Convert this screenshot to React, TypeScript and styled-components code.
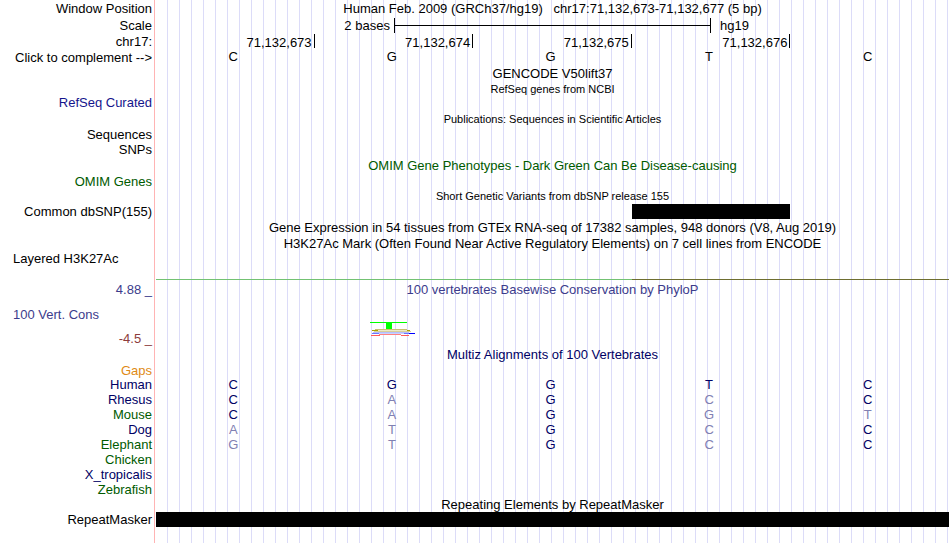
import React from "react";
import styled, { createGlobalStyle } from "styled-components";

const GlobalStyle = createGlobalStyle`
  *, *::before, *::after { box-sizing: border-box; }
  body {
    margin: 0;
    background: #fff;
    color: #000;
    font-family: "Liberation Sans", Arial, Helvetica, sans-serif;
    font-size: 13px;
    line-height: 15px;
  }
`;

const LABEL_WIDTH = 154;

const Browser = styled.main`
  display: flex;
  flex-direction: column;
  min-height: 100vh;
  margin-right: 1px;
  background:
    linear-gradient(#ffb4b4, #ffb4b4) ${LABEL_WIDTH}px 0 / 1px 100% no-repeat,
    repeating-linear-gradient(to right, transparent 0 11px, #dcdcf8 11px 12px) ${LABEL_WIDTH + 2}px 0 no-repeat;
`;

const Row = styled.div<{ $h: number }>`
  display: grid;
  grid-template-columns: ${LABEL_WIDTH}px minmax(0, 1fr);
  column-gap: 2px;
  align-items: center;
  height: ${(p) => p.$h}px;
`;

const Label = styled.span<{ $color?: string; $left?: boolean; $align?: "start" | "end" }>`
  padding: 0 2px 0 13px;
  color: ${(p) => p.$color ?? "#000"};
  text-align: ${(p) => (p.$left ? "left" : "right")};
  align-self: ${(p) => p.$align ?? "center"};
  white-space: nowrap;
`;

const ComplementButton = styled.button`
  padding: 0 2px 0 0;
  border: 0;
  background: none;
  color: inherit;
  font: inherit;
  text-align: right;
  white-space: nowrap;
  cursor: pointer;
`;

const Title = styled.h2<{ $color?: string; $small?: boolean }>`
  grid-column: 2;
  margin: 0;
  padding-top: ${(p) => (p.$small ? 1 : 0)}px;
  color: ${(p) => p.$color ?? "#000"};
  font-size: ${(p) => (p.$small ? 11 : 13)}px;
  font-weight: 400;
  text-align: center;
  white-space: pre;
`;

const Scale = styled.div`
  display: grid;
  grid-template-columns: 3fr 4fr 3fr;
  align-items: center;
`;

const ScaleText = styled.span<{ $left?: boolean }>`
  padding: ${(p) => (p.$left ? "0 4px 0 0" : "0 0 0 9px")};
  text-align: ${(p) => (p.$left ? "right" : "left")};
`;

const ScaleBar = styled.div`
  display: flex;
  align-items: center;
  height: 15px;
  border: solid #000;
  border-width: 0 1px;
  &::before {
    content: "";
    flex: 1;
    height: 1px;
    background: #000;
  }
`;

const Columns = styled.div`
  grid-column: 2;
  align-self: start;
  display: grid;
  grid-template-columns: repeat(5, minmax(0, 1fr));
`;

const Tick = styled.span`
  height: 14px;
  padding-right: 2px;
  border-right: 1px solid #000;
  line-height: 17px;
  text-align: right;
`;

const Base = styled.span<{ $color?: string }>`
  padding-right: 4px;
  color: ${(p) => p.$color ?? "#000"};
  text-align: center;
`;

const Variant = styled.div`
  grid-column: 4;
  height: 15px;
  background: #000;
`;

const Repeat = styled.div`
  height: 15px;
  background: #000;
`;

const Signal = styled.div`
  grid-column: 2;
  height: 1px;
  background: linear-gradient(to right, #73c273 60%, #6e6e30 60%);
`;

const LogoCell = styled.div`
  grid-column: 2;
  display: flex;
  justify-content: center;
`;

const NAVY = "#000064";
const GREEN = "#005a00";
const SLATE = "#3c3c8c";
const FADED = "#8080b2";

function ConservationLogo() {
  return (
    <svg width="48" height="16" viewBox="0 0 48 16" aria-hidden="true">
      <path d="M0 .5h37" stroke="#00ff00" />
      <path d="M16 1h6v6h-6z" fill="#00ff00" />
      <path d="M5 7.5h32" stroke="#c9c070" />
      <path d="M7 8.5h30" stroke="#eee9c8" />
      <path d="M2 8.5h6M37 8.5h3" stroke="#a9a000" />
      <path d="M4 9.5h37" stroke="#d6cf9a" />
      <path d="M3 10.5h36" stroke="#b4beff" />
      <path d="M2 11.5h38" stroke="#c8d2ff" />
      <path d="M2 11.5h7M34 11.5h5" stroke="#6a76ff" />
      <path d="M39 11.5h6" stroke="#0000ff" />
      <path d="M9 12.5h22" stroke="#ff8080" />
      <path d="M1 13.5h9M31 13.5h8" stroke="#ff5a5a" />
    </svg>
  );
}

const positions = ["71,132,673", "71,132,674", "71,132,675", "71,132,676"];
const reference = "CGGTC";

/* Lower-case letters differ from the human base and are drawn faded. */
const species = [
  { name: "Human", color: NAVY, bases: "CGGTC" },
  { name: "Rhesus", color: NAVY, bases: "CaGcC" },
  { name: "Mouse", color: GREEN, bases: "CaGgt" },
  { name: "Dog", color: NAVY, bases: "atGcC" },
  { name: "Elephant", color: GREEN, bases: "gtGcC" },
  { name: "Chicken", color: GREEN, bases: "" },
  { name: "X_tropicalis", color: NAVY, bases: "" },
  { name: "Zebrafish", color: GREEN, bases: "" },
];

export default function App() {
  return (
    <>
      <GlobalStyle />
      <Browser>
        <Row $h={16}>
          <Label>Window Position</Label>
          <Title>{"Human Feb. 2009 (GRCh37/hg19)   chr17:71,132,673-71,132,677 (5 bp)"}</Title>
        </Row>
        <Row $h={18}>
          <Label>Scale</Label>
          <Scale>
            <ScaleText $left>2 bases</ScaleText>
            <ScaleBar />
            <ScaleText>hg19</ScaleText>
          </Scale>
        </Row>
        <Row $h={15}>
          <Label>chr17:</Label>
          <Columns>
            {positions.map((p) => (
              <Tick key={p}>{p}</Tick>
            ))}
          </Columns>
        </Row>
        <Row $h={16}>
          <ComplementButton type="button">{"Click to complement -->"}</ComplementButton>
          <Columns>
            {[...reference].map((b, i) => (
              <Base key={i}>{b}</Base>
            ))}
          </Columns>
        </Row>
        <Row $h={16}><Title>GENCODE V50lift37</Title></Row>
        <Row $h={14}><Title $small>RefSeq genes from NCBI</Title></Row>
        <Row $h={15}><Label $color="#14148c">RefSeq Curated</Label></Row>
        <Row $h={17}><Title $small>Publications: Sequences in Scientific Articles</Title></Row>
        <Row $h={14}><Label>Sequences</Label></Row>
        <Row $h={16}><Label>SNPs</Label></Row>
        <Row $h={17}><Title $color={GREEN}>OMIM Gene Phenotypes - Dark Green Can Be Disease-causing</Title></Row>
        <Row $h={14}><Label $color={GREEN}>OMIM Genes</Label></Row>
        <Row $h={16}><Title $small>Short Genetic Variants from dbSNP release 155</Title></Row>
        <Row $h={15}>
          <Label>Common dbSNP(155)</Label>
          <Columns><Variant /></Columns>
        </Row>
        <Row $h={17}><Title>Gene Expression in 54 tissues from GTEx RNA-seq of 17382 samples, 948 donors (V8, Aug 2019)</Title></Row>
        <Row $h={15}><Title>H3K27Ac Mark (Often Found Near Active Regulatory Elements) on 7 cell lines from ENCODE</Title></Row>
        <Row $h={28}><Label $left $align="start">Layered H3K27Ac</Label></Row>
        <Row $h={1}><Signal /></Row>
        <Row $h={18}>
          <Label $color={SLATE}>4.88 _</Label>
          <Title $color={SLATE}>100 vertebrates Basewise Conservation by PhyloP</Title>
        </Row>
        <Row $h={24}><Label $color={SLATE} $left $align="end">100 Vert. Cons</Label></Row>
        <Row $h={24}>
          <Label $color="#8c3c3c" $align="end">-4.5 _</Label>
          <Columns>
            <LogoCell><ConservationLogo /></LogoCell>
          </Columns>
        </Row>
        <Row $h={17}><Title $color={NAVY}>Multiz Alignments of 100 Vertebrates</Title></Row>
        <Row $h={14}><Label $color="#e08a14">Gaps</Label></Row>
        {species.map((s) => (
          <Row key={s.name} $h={15}>
            <Label $color={s.color}>{s.name}</Label>
            <Columns>
              {[...s.bases].map((b, i) => (
                <Base key={i} $color={b === b.toUpperCase() ? NAVY : FADED}>
                  {b.toUpperCase()}
                </Base>
              ))}
            </Columns>
          </Row>
        ))}
        <Row $h={15}><Title>Repeating Elements by RepeatMasker</Title></Row>
        <Row $h={15}>
          <Label>RepeatMasker</Label>
          <Repeat />
        </Row>
      </Browser>
    </>
  );
}
